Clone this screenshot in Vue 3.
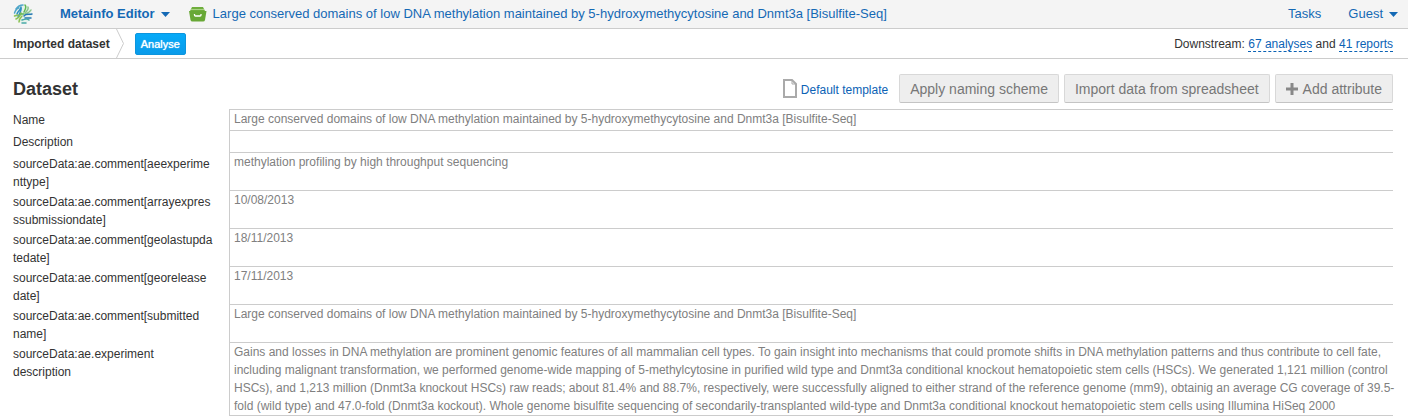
<script setup>
const title = 'Large conserved domains of low DNA methylation maintained by 5-hydroxymethycytosine and Dnmt3a [Bisulfite-Seq]'

const rows = [
  { label: 'Name', value: title },
  { label: 'Description', value: '' },
  { label: 'sourceData:ae.comment[aeexperimenttype]', value: 'methylation profiling by high throughput sequencing' },
  { label: 'sourceData:ae.comment[arrayexpresssubmissiondate]', value: '10/08/2013' },
  { label: 'sourceData:ae.comment[geolastupdatedate]', value: '18/11/2013' },
  { label: 'sourceData:ae.comment[georelease date]', value: '17/11/2013' },
  { label: 'sourceData:ae.comment[submitted name]', value: title },
  {
    label: 'sourceData:ae.experiment description',
    value:
      'Gains and losses in DNA methylation are prominent genomic features of all mammalian cell types. To gain insight into mechanisms that could promote shifts in DNA methylation patterns and thus contribute to cell fate, including malignant transformation, we performed genome-wide mapping of 5-methylcytosine in purified wild type and Dnmt3a conditional knockout hematopoietic stem cells (HSCs). We generated 1,121 million (control HSCs), and 1,213 million (Dnmt3a knockout HSCs) raw reads; about 81.4% and 88.7%, respectively, were successfully aligned to either strand of the reference genome (mm9), obtainig an average CG coverage of 39.5-fold (wild type) and 47.0-fold (Dnmt3a kockout). Whole genome bisulfite sequencing of secondarily-transplanted wild-type and Dnmt3a conditional knockout hematopoietic stem cells using Illumina HiSeq 2000',
  },
]
</script>

<template>
  <div class="page">
    <header class="topbar">
      <a class="logo" href="#" aria-label="Home">
        <svg width="20" height="20" viewBox="0 0 20 20" fill="none" stroke-width="1.5" stroke-linecap="round">
          <circle cx="10" cy="10" r="9" fill="#e3f1ea" />
          <path d="M3 5C5 2 8 1 10 1M1.500 9C3 5 5 4 6 4" stroke="#4fa5c9" />
          <path d="M4 10C5 7 8 6 8 3M8 3C9 6 7 9 5 13" stroke="#2f8fc1" />
          <path d="M1.500 12L5 11M3 15C6 14 7 12 8 9M6 18C6 16 7 14 9 12" stroke="#8cc152" />
          <path d="M12 1C14 3 12 6 11 8M8 10H11" stroke="#5fb653" />
          <path d="M15 3C16 5 14 7 12 9M18 6C17 8 15 9 13 10" stroke="#8cc68b" />
          <path d="M11 12C13 9 16 11 19 10M12 14H18" stroke="#2878b5" />
          <path d="M9 16C12 15 15 15 16 16M9 19H13" stroke="#48a9a6" />
        </svg>
      </a>
      <button class="menu strong" type="button">
        Metainfo Editor
        <svg width="9" height="5" viewBox="0 0 9 5"><path d="M0 0H9L4.5 5Z" fill="currentColor" /></svg>
      </button>
      <a class="crumb" href="#">
        <svg width="18" height="15" viewBox="0 0 18 15">
          <path d="M3 0H14L16 4H1Z" fill="#6fae3d" />
          <path d="M2 2.500H15" stroke="#a9d384" />
          <path d="M0 4H17.500L16 13Q15.700 14.500 14 14.500H3.500Q1.800 14.500 1.500 13Z" fill="#68a836" />
          <path d="M5.500 7V8Q5.500 9 6.500 9H11Q12 9 12 8V7" stroke="#fff" stroke-width="1.300" fill="none" />
        </svg>
        <span>{{ title }}</span>
      </a>
      <nav class="account">
        <a href="#">Tasks</a>
        <button class="menu" type="button">
          Guest
          <svg width="9" height="5" viewBox="0 0 9 5"><path d="M0 0H9L4.5 5Z" fill="currentColor" /></svg>
        </button>
      </nav>
    </header>

    <div class="stepbar">
      <span class="step">Imported dataset</span>
      <svg class="chevron" width="8" height="29" viewBox="0 0 8 29" fill="none" stroke="#ccc"><path d="M.5 0L7.5 14.5L.5 29" /></svg>
      <button class="analyse" type="button">Analyse</button>
      <p class="downstream">Downstream: <a href="#">67 analyses</a> and <a href="#">41 reports</a></p>
    </div>

    <main class="content">
      <div class="heading">
        <h1>Dataset</h1>
        <div class="actions">
          <a class="template" href="#">
            <svg width="14" height="19" viewBox="0 0 14 19" fill="none" stroke="#aaa" stroke-width="2">
              <path d="M1 1H9L13 5V18H1Z" /><path d="M9 1V5H13" stroke-width="1" />
            </svg>
            <span>Default template</span>
          </a>
          <button class="btn" type="button">Apply naming scheme</button>
          <button class="btn" type="button">Import data from spreadsheet</button>
          <button class="btn" type="button">
            <svg width="12" height="12" viewBox="0 0 12 12"><path d="M6 0V12M0 6H12" stroke="#888" stroke-width="3" /></svg>
            Add attribute
          </button>
        </div>
      </div>

      <table class="attributes">
        <tbody>
          <tr v-for="row in rows" :key="row.label">
            <th scope="row"><div class="label">{{ row.label }}</div></th>
            <td><div class="value">{{ row.value }}</div></td>
          </tr>
        </tbody>
      </table>
    </main>
  </div>
</template>

<style>
body {
  margin: 0;
  background: #fff;
}
</style>

<style scoped>
.page {
  font: 12px/18px "Liberation Sans", Arial, sans-serif;
  color: #333;
}
a {
  color: #0b62b5;
  text-decoration: none;
}
button {
  font-family: inherit;
  cursor: pointer;
}
svg {
  display: block;
  flex: none;
}
.topbar {
  display: flex;
  align-items: center;
  height: 28px;
  padding: 0 10px 0 13px;
  background: #f4f4f4;
  border-bottom: 1px solid #ccc;
  font-size: 13px;
}
.topbar a,
.menu {
  color: #1469b5;
}
.menu {
  display: flex;
  align-items: center;
  gap: 6px;
  padding: 0;
  border: 0;
  background: none;
  font-size: 13px;
  line-height: 18px;
}
.strong {
  margin-left: 27px;
  font-weight: bold;
}
.crumb {
  display: flex;
  align-items: center;
  gap: 6px;
  margin-left: 19px;
  white-space: nowrap;
}
.account {
  display: flex;
  gap: 27px;
  margin-left: auto;
}
.stepbar {
  display: flex;
  align-items: center;
  height: 29px;
  padding: 0 15px 0 13px;
  border-bottom: 1px solid #ccc;
}
.step {
  font-weight: bold;
}
.chevron {
  margin: 0 11px 0 6px;
}
.analyse {
  height: 22px;
  padding: 0 5px;
  border: 1px solid #0d95dd;
  border-radius: 2px;
  background: linear-gradient(#06aaf8, #0a9bea);
  color: #fff;
  font-size: 11px;
  text-shadow: 0 0 1px #fff;
}
.downstream {
  margin: 0 0 0 auto;
}
.downstream a {
  border-bottom: 1px dashed #0b62b5;
}
.content {
  padding: 15px 15px 0 13px;
}
.heading {
  display: flex;
  align-items: center;
  justify-content: space-between;
  margin-bottom: 6px;
}
h1 {
  margin: 0;
  font-size: 18px;
  line-height: 24px;
}
.actions {
  display: flex;
  align-items: center;
  gap: 5px;
}
.template {
  display: flex;
  align-items: center;
  gap: 4px;
  margin-right: 6px;
}
.template span {
  padding-top: 2px;
}
.btn {
  display: flex;
  align-items: center;
  gap: 5px;
  height: 29px;
  padding: 0 10px;
  border: 1px solid #d8d8d8;
  border-bottom-color: #c4c4c4;
  border-radius: 2px;
  background: #eee;
  color: #777;
  font-size: 14px;
}
.attributes {
  width: 100%;
  table-layout: fixed;
  border-spacing: 0;
}
tr {
  height: 22px;
}
tr:first-child {
  height: 21px;
}
th {
  width: 216px;
  padding: 3px 0 0;
  font-weight: normal;
  text-align: left;
  vertical-align: top;
}
tr:first-child th {
  padding-top: 2px;
}
.label {
  width: 200px;
  margin-bottom: -1px;
  overflow-wrap: break-word;
}
td {
  padding: 0 0 0 4px;
  border-top: 1px solid #ccc;
  border-left: 1px solid #ccc;
  color: #808080;
  vertical-align: top;
}
.value {
  margin-right: -4px;
}
tr:last-child td {
  border-bottom: 1px solid #ccc;
}
</style>
